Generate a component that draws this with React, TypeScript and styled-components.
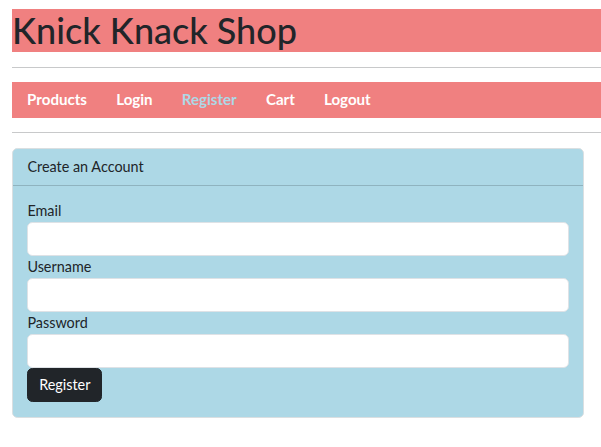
import React from "react";
import styled, { createGlobalStyle } from "styled-components";

const Global = createGlobalStyle`
  html, body { margin: 0; padding: 0; background: #fff; }
  body {
    font-family: Lato, "Noto Sans", sans-serif;
    font-size: 14.4px;
    line-height: 1.5;
    color: #212529;
  }
  * { box-sizing: border-box; }
`;

const Page = styled.div`
  padding: 9px 0 0 12px;
`;

const Title = styled.h1`
  margin: 0 0 7.2px;
  background: #f08080;
  font-size: 36px;
  font-weight: 500;
  line-height: 1.2;
  color: #212529;
`;

const Divider = styled.hr`
  margin: 14.4px 0;
  border: 0;
  border-top: 1px solid #c8c9ca;
`;

const Nav = styled.nav`
  display: flex;
  background: #f08080;
  padding: 7.2px 0 7.2px 0.5px;
`;

const NavLink = styled.a<{ $active?: boolean }>`
  padding: 0 14.6px;
  font-weight: 700;
  font-size: 15.1px;
  line-height: 21.6px;
  color: ${(p) => (p.$active ? "#add8e6" : "#ffffff")};
  text-decoration: none;
  cursor: pointer;
`;

const Card = styled.section`
  width: 572px;
  background: #add8e6;
  border: 1px solid #dadfe1;
  border-radius: 5.4px;
`;

const CardHeader = styled.div`
  padding: 7.2px 14.4px;
  border-bottom: 1px solid #8fb3bf;
  line-height: 21.6px;
`;

const CardBody = styled.form`
  padding: 14.4px;
  display: flex;
  flex-direction: column;
  align-items: flex-start;
`;

const Label = styled.label`
  line-height: 21.6px;
`;

const Input = styled.input`
  display: block;
  width: 100%;
  height: 34.4px;
  padding: 5.4px 10.8px;
  font: inherit;
  border: 1px solid #dee2e6;
  border-radius: 5.4px;
  background: #fff;
  outline: none;
`;

const Button = styled.button`
  padding: 5.4px 10.8px;
  font-family: inherit;
  font-size: 14.4px;
  line-height: 21.6px;
  color: #fff;
  background: #212529;
  border: 1px solid #212529;
  border-radius: 5.4px;
  cursor: pointer;
`;

const fields = [
  { id: "email", label: "Email", type: "email" },
  { id: "username", label: "Username", type: "text" },
  { id: "password", label: "Password", type: "password" },
];

export default function App() {
  return (
    <>
      <Global />
      <Page>
        <Title>Knick Knack Shop</Title>
        <Divider />
        <Nav>
          <NavLink>Products</NavLink>
          <NavLink>Login</NavLink>
          <NavLink $active>Register</NavLink>
          <NavLink>Cart</NavLink>
          <NavLink>Logout</NavLink>
        </Nav>
        <Divider />
        <Card>
          <CardHeader>Create an Account</CardHeader>
          <CardBody onSubmit={(e) => e.preventDefault()}>
            {fields.map((f) => (
              <React.Fragment key={f.id}>
                <Label htmlFor={f.id}>{f.label}</Label>
                <Input id={f.id} type={f.type} />
              </React.Fragment>
            ))}
            <Button type="submit">Register</Button>
          </CardBody>
        </Card>
      </Page>
    </>
  );
}
